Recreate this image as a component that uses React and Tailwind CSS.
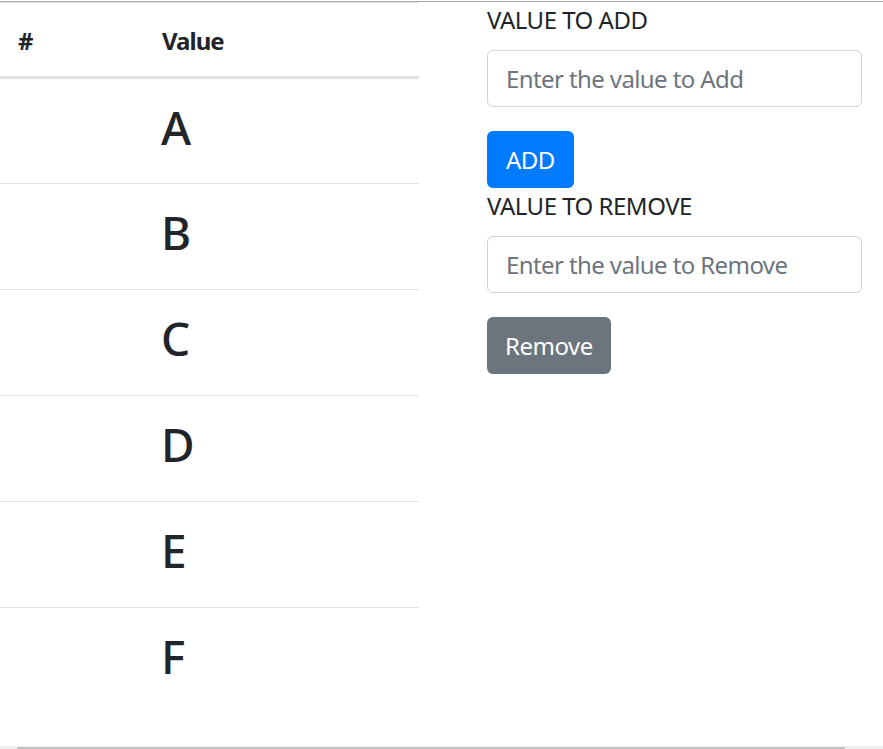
import React from "react";

const rows = ["A", "B", "C", "D", "E", "F"];

export default function App() {
  return (
    <div
      className="h-[749px] flex flex-col bg-white overflow-hidden text-[#212529]"
      style={{ fontFamily: '"Noto Sans", "Open Sans", sans-serif' }}
    >
      <div className="h-px mt-px bg-[#a9a9a9] shrink-0" />
      <div className="flex flex-1 min-h-0">
        <div className="w-[419px] shrink-0">
          <table className="w-full border-collapse">
            <thead>
              <tr className="border-t border-[#dee2e6]">
                <th className="w-[147px] h-[75px] pl-[18px] pt-[3px] text-left align-middle text-[24px] font-bold leading-[36px] border-b-[3px] border-[#dee2e6]">
                  #
                </th>
                <th className="h-[75px] pl-[15px] pt-[3px] text-left align-middle text-[24px] font-bold leading-[36px] tracking-[-1px] border-b-[3px] border-[#dee2e6]">
                  Value
                </th>
              </tr>
            </thead>
            <tbody>
              {rows.map((r, i) => (
                <tr
                  key={r}
                  className={i === 0 ? "" : "border-t border-[#dee2e6]"}
                >
                  <td className="h-[106px] pl-[18px]" />
                  <td className="h-[106px] pl-[14px] align-top pt-[20px]">
                    <h2 className="text-[46px] font-medium leading-[57px] m-0">
                      {r}
                    </h2>
                  </td>
                </tr>
              ))}
            </tbody>
          </table>
        </div>
        <div className="ml-[68px] w-[375px] flex flex-col tracking-[-0.5px]">
          <label className="text-[24px] leading-[36px] uppercase">
            Value to Add
          </label>
          <input
            className="mt-[12px] h-[57px] w-full border border-[#ced4da] rounded-[6px] px-[18px] text-[24px] tracking-[-0.6px] placeholder:text-[#6c757d] outline-none"
            placeholder="Enter the value to Add"
          />
          <button className="mt-[24px] self-start h-[57px] px-[19px] bg-[#007bff] text-white text-[24px] leading-[36px] rounded-[6px]">
            ADD
          </button>
          <label className="text-[24px] leading-[36px] uppercase">
            Value to Remove
          </label>
          <input
            className="mt-[12px] h-[57px] w-full border border-[#ced4da] rounded-[6px] px-[18px] text-[24px] tracking-[-0.6px] placeholder:text-[#6c757d] outline-none"
            placeholder="Enter the value to Remove"
          />
          <button className="mt-[24px] self-start h-[57px] px-[18px] bg-[#6c757d] text-white text-[24px] leading-[36px] rounded-[6px]">
            Remove
          </button>
        </div>
      </div>
      <div className="h-[3px] bg-[#f1f1f1] flex items-end shrink-0">
        <div className="ml-[17px] w-[828px] h-[2px] bg-[#c1c1c1]" />
      </div>
    </div>
  );
}
